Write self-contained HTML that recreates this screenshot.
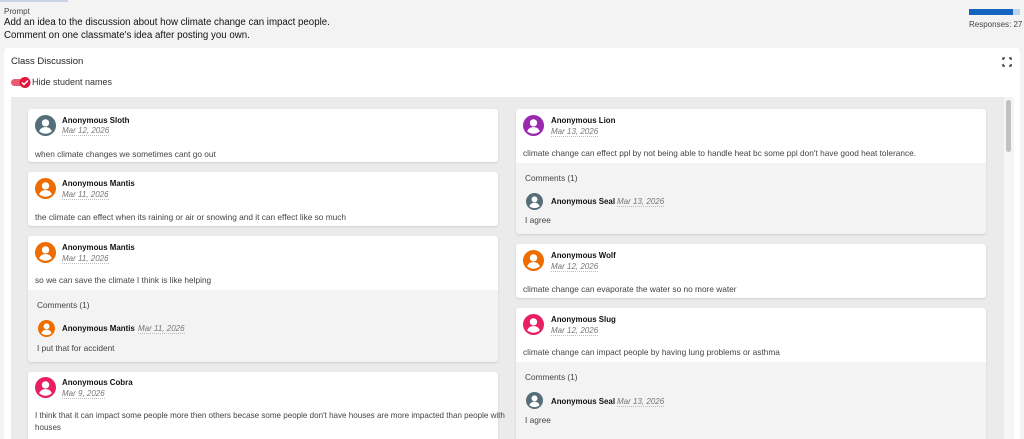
<!DOCTYPE html>
<html style="width:1024px;height:439px;overflow:hidden"><head><meta charset="utf-8"><style>
*{margin:0;padding:0;box-sizing:border-box}
body{width:1024px;height:439px;overflow:hidden;background:#f3f3f3;font-family:"Liberation Sans",sans-serif;color:#222;position:relative}
.a{position:absolute;white-space:nowrap}
.card{position:absolute;background:#fff;border-radius:3px;box-shadow:0 1px 2px rgba(0,0,0,.12);overflow:hidden}
.cm{position:absolute;left:0;right:0;bottom:0;background:#f3f3f3}
.nm{font-size:7.9px;font-weight:bold;color:#111}
.dt{font-size:8px;font-style:italic;color:#777;border-bottom:1px dotted #bbb}
.tx{font-size:8.3px;color:#444}
</style></head><body>
<div class="a" style="left:0;top:0;width:68px;height:2px;background:#c9d3e8"></div>
<div class="a" style="left:4px;top:7px;font-size:8px;color:#444">Prompt</div>
<div class="a" style="left:4px;top:16px;font-size:9.7px;color:#111;line-height:13px">Add an idea to the discussion about how climate change can impact people.<br>Comment on one classmate's idea after posting you own.</div>
<div class="a" style="left:969px;top:9px;width:51px;height:6px;background:#bcd3ee"></div>
<div class="a" style="left:969px;top:9px;width:44px;height:6px;background:#1565c0"></div>
<div class="a" style="left:969px;top:20px;font-size:8px;color:#444">Responses: 27</div>

<div class="a" style="left:4px;top:48px;width:1016px;height:400px;background:#fff;border-radius:4px"></div>
<div class="a" style="left:11px;top:56px;font-size:9.5px;color:#222">Class Discussion</div>
<svg class="a" style="left:1002px;top:57px" width="10" height="10" viewBox="0 0 10 10"><path d="M1 3V1h2M7 1h2v2M9 7v2H7M3 9H1V7" fill="none" stroke="#222" stroke-width="1.3"/></svg>
<svg class="a" style="left:10px;top:76px" width="22" height="12" viewBox="0 0 22 12"><rect x="1" y="3" width="16" height="7" rx="3.5" fill="#ec5a72"/><circle cx="15" cy="6.5" r="5.5" fill="#e0163f"/><path d="M12 6.5l2 2 4-4" fill="none" stroke="#fff" stroke-width="1.5"/></svg>
<div class="a" style="left:32px;top:77px;font-size:9px;color:#333">Hide student names</div>

<div class="a" style="left:11px;top:97px;width:1003px;height:350px;background:#ebebeb"></div>
<div class="a" style="left:1004px;top:97px;width:10px;height:350px;background:#f5f5f5"></div>
<div class="a" style="left:1006px;top:100px;width:5px;height:52px;background:#c1c1c1;border-radius:3px"></div>

<svg width="0" height="0" style="position:absolute"><defs><symbol id="av" viewBox="0 0 20 20"><circle cx="10" cy="7.5" r="3.5" fill="#fff"/><path d="M4 15.5c1-3 3.5-4 6-4s5 1 6 4c-1.5 1.5-3.6 2.3-6 2.3s-4.5-.8-6-2.3z" fill="#fff"/></symbol></defs></svg>

<!-- left column -->
<div class="card" style="left:28px;top:109px;width:470px;height:53px"></div>
<svg class="a" style="left:35px;top:115px" width="21" height="21"><circle cx="10.5" cy="10.5" r="10.5" fill="#546e7a"/><use href="#av" width="21" height="21"/></svg>
<div class="a nm" style="left:62px;top:116px">Anonymous Sloth</div>
<div class="a dt" style="left:62px;top:126px">Mar 12, 2026</div>
<div class="a tx" style="left:35px;top:149px">when climate changes we sometimes cant go out</div>

<div class="card" style="left:28px;top:172px;width:470px;height:54px"></div>
<svg class="a" style="left:35px;top:178px" width="21" height="21"><circle cx="10.5" cy="10.5" r="10.5" fill="#ef6c00"/><use href="#av" width="21" height="21"/></svg>
<div class="a nm" style="left:62px;top:179px">Anonymous Mantis</div>
<div class="a dt" style="left:62px;top:190px">Mar 11, 2026</div>
<div class="a tx" style="left:35px;top:212px">the climate can effect when its raining or air or snowing and it can effect like so much</div>

<div class="card" style="left:28px;top:236px;width:470px;height:126px"><div class="cm" style="top:54px"></div></div>
<svg class="a" style="left:35px;top:242px" width="21" height="21"><circle cx="10.5" cy="10.5" r="10.5" fill="#ef6c00"/><use href="#av" width="21" height="21"/></svg>
<div class="a nm" style="left:62px;top:243px">Anonymous Mantis</div>
<div class="a dt" style="left:62px;top:254px">Mar 11, 2026</div>
<div class="a tx" style="left:35px;top:275px">so we can save the climate I think is like helping</div>
<div class="a tx" style="left:37px;top:300px">Comments (1)</div>
<svg class="a" style="left:38px;top:320px" width="17" height="17"><circle cx="8.5" cy="8.5" r="8.5" fill="#ef6c00"/><use href="#av" width="17" height="17"/></svg>
<div class="a nm" style="left:62px;top:324px">Anonymous Mantis</div>
<div class="a dt" style="left:138px;top:324px">Mar 11, 2026</div>
<div class="a tx" style="left:37px;top:343px">I put that for accident</div>

<div class="card" style="left:28px;top:372px;width:470px;height:80px"></div>
<svg class="a" style="left:35px;top:377px" width="21" height="21"><circle cx="10.5" cy="10.5" r="10.5" fill="#e91e63"/><use href="#av" width="21" height="21"/></svg>
<div class="a nm" style="left:62px;top:378px">Anonymous Cobra</div>
<div class="a dt" style="left:62px;top:389px">Mar 9, 2026</div>
<div class="a tx" style="left:35px;top:410px;line-height:12px;font-size:8.05px">I think that it can impact some people more then others becase some people don't have houses are more impacted than people with<br>houses</div>

<!-- right column -->
<div class="card" style="left:516px;top:109px;width:470px;height:125px"><div class="cm" style="top:54px"></div></div>
<svg class="a" style="left:523px;top:115px" width="21" height="21"><circle cx="10.5" cy="10.5" r="10.5" fill="#9c27b0"/><use href="#av" width="21" height="21"/></svg>
<div class="a nm" style="left:551px;top:116px">Anonymous Lion</div>
<div class="a dt" style="left:551px;top:127px">Mar 13, 2026</div>
<div class="a tx" style="left:523px;top:148px">climate change can effect ppl by not being able to handle heat bc some ppl don't have good heat tolerance.</div>
<div class="a tx" style="left:525px;top:173px">Comments (1)</div>
<svg class="a" style="left:526px;top:193px" width="17" height="17"><circle cx="8.5" cy="8.5" r="8.5" fill="#546e7a"/><use href="#av" width="17" height="17"/></svg>
<div class="a nm" style="left:551px;top:197px">Anonymous Seal</div>
<div class="a dt" style="left:617px;top:197px">Mar 13, 2026</div>
<div class="a tx" style="left:525px;top:215px">I agree</div>

<div class="card" style="left:516px;top:244px;width:470px;height:54px"></div>
<svg class="a" style="left:523px;top:250px" width="21" height="21"><circle cx="10.5" cy="10.5" r="10.5" fill="#ef6c00"/><use href="#av" width="21" height="21"/></svg>
<div class="a nm" style="left:551px;top:251px">Anonymous Wolf</div>
<div class="a dt" style="left:551px;top:262px">Mar 12, 2026</div>
<div class="a tx" style="left:523px;top:284px">climate change can evaporate the water so no more water</div>

<div class="card" style="left:516px;top:308px;width:470px;height:140px"><div class="cm" style="top:54px"></div></div>
<svg class="a" style="left:523px;top:314px" width="21" height="21"><circle cx="10.5" cy="10.5" r="10.5" fill="#e91e63"/><use href="#av" width="21" height="21"/></svg>
<div class="a nm" style="left:551px;top:315px">Anonymous Slug</div>
<div class="a dt" style="left:551px;top:326px">Mar 12, 2026</div>
<div class="a tx" style="left:523px;top:347px">climate change can impact people by having lung problems or asthma</div>
<div class="a tx" style="left:525px;top:372px">Comments (1)</div>
<svg class="a" style="left:526px;top:392px" width="17" height="17"><circle cx="8.5" cy="8.5" r="8.5" fill="#546e7a"/><use href="#av" width="17" height="17"/></svg>
<div class="a nm" style="left:551px;top:397px">Anonymous Seal</div>
<div class="a dt" style="left:617px;top:397px">Mar 13, 2026</div>
<div class="a tx" style="left:525px;top:415px">I agree</div>
</body></html>
